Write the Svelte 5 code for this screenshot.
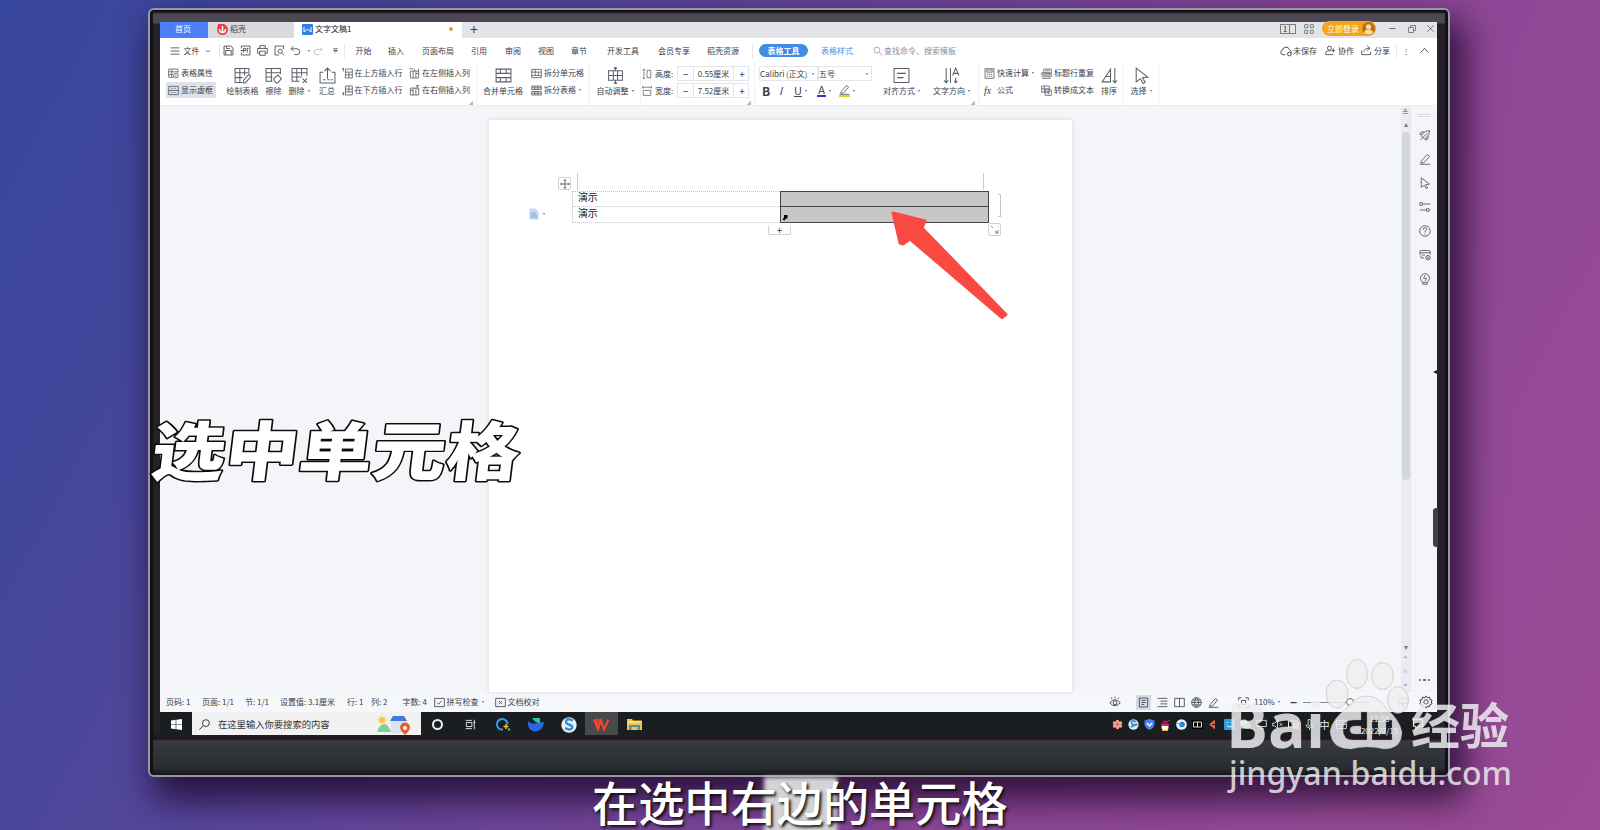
<script lang="ts">
	// 16x16 line icons, drawn with the current text colour.
	const icons: Record<string, string> = {
		menu: 'M1 3h14M1 8h14M1 13h14',
		down: 'M2 5l6 6 6-6',
		up: 'M1 12l7-8 7 8',
		save: 'M1.500 1.500h10l3 3v10h-13zM4 14v-6h8v6M5 2v3h5',
		pdf: 'M2 5v-3.500h12.500v13h-12.500v-3.500M5 11v-6h3.500v3h-3M1 8h4M10.500 5h2M10.500 5v6',
		print: 'M4 5v-4h8v4M3.500 12h-2.500v-7h14v7h-2.500M4 9h8v6h-8z',
		preview: 'M14 6v-4.500h-12.500v13h6M11 11.500l3.500 3.500M12 9a3 3 0 1 1-6 0a3 3 0 1 1 6 0z',
		undo: 'M5 2l-3.500 3.500l3.500 3.500M2 5.500h8a4 4 0 0 1 0 8.500h-4',
		redo: 'M11 2l3.500 3.500l-3.500 3.500M14 5.500h-8a4 4 0 0 0 0 8.500h4',
		more: 'M3 4h10M4 8l4 4 4-4z',
		search: 'M11 6.500a4.800 4.800 0 1 1-9.600 0a4.800 4.800 0 1 1 9.600 0zM10 10.500l5 5',
		find: 'M15 6a5 5 0 1 1-10 0a5 5 0 1 1 10 0zM6.500 9.500l-6 6',
		cloud: 'M7 13h-3a3.200 3.200 0 0 1-.5-6.300a4.600 4.600 0 0 1 9-.5a3.500 3.500 0 0 1 2 5M15 12a2.500 2.500 0 1 1-5 0a2.500 2.500 0 1 1 5 0z',
		person: 'M9.500 4.500a3 3 0 1 1-6 0a3 3 0 1 1 6 0zM8 14h-7v-2.500q0-3 4-3h3M12 5v6M9.500 8h5M8 14h4',
		share: 'M1 8v6h13v-4M4 10q1-5 8-5.500M9 1l4 3.500l-4 3.500',
		prop: 'M8 13.500h-7v-12h13.500v5M1 5.500h13.500M1 9.500h6M5.500 1.500v12M15 11a3.500 3.500 0 1 1-7 0a3.500 3.500 0 1 1 7 0zM11.500 9.500v3.500',
		frame: 'M1 2h14v12h-14zM1 8h14M5 5h2M9 5h2M5 11h2M9 11h2',
		draw: 'M8 14.500h-7v-13h13v5M1 5.500h12M1 10h7M5.500 1.500v13M10 2v6M9 15v-2.500l5-5.500l2 2l-5.500 6z',
		erase: 'M7 13.500h-6v-12h13.500v5M1 5.500h13M1 9.500h6M6 1.500v12M8 11.500l4-4l3.500 3.500l-3.500 4h-1.500z',
		del: 'M8 13.500h-7v-12h14v7M1 5.500h14M1 9.500h9M5.500 1.500v12M10 1.500v7M11 11l4 4M15 11l-4 4',
		sum: 'M4 5h-3v10h14v-10h-3M8 11v-10M5 4l3-3l3 3M4 12h2M8 12h2M11 12h2',
		rowUp: 'M5 1.500h10v13h-10zM5 6h10M5 10h10M10 6v8M0 1h3M2 0v5',
		rowDown: 'M5 1.500h10v13h-10zM5 6h10M5 10h10M10 1v9M0 13h3M2 10v5',
		colLeft: 'M2 4.500h12v10h-12zM6 4.500v10M10 4.500v10M10 8h4M1 1h5M8 1v3M14 1v4',
		colRight: 'M2 4.500h12v10h-12zM6 4.500v10M10 4.500v10M2 8h4M10 1h5M12 0v5',
		merge: 'M1 2h14v12h-14zM1 6h14M1 10h14M5 2v4M10.500 2v4M5 10v4M10.500 10v4',
		splitCell: 'M1 2h14v12h-14zM1 6h14M1 11h14M6 6v5M10.500 6v5M6 2v4',
		splitTable: 'M1 1.500h14v5h-14zM1 9.500h14v5h-14zM5.500 1.500v5M10 1.500v5M5.500 9.500v5M10 9.500v5M1 12h14M1 4h14',
		auto: 'M1.500 3.500h13v9h-13zM1.500 8h13M6 3.500v9M10 3.500v9M8 0v3M8 13v3M6.500 1.500l1.500-1.500l1.500 1.500M6.500 14.500l1.500 1.500l1.500-1.500',
		height: 'M1 1h4M3 1v14M1 15h4M8 2h6v12h-6z',
		width: 'M1 2h14M1 0v4M15 0v4M2 7h12v8h-12z',
		align: 'M1 1.500h14v13h-14zM4 6h8M4 10h6',
		direction: 'M3 1v14M1 12.500l2 2.500l2-2.500M7 1v14M9 8l3-7l3 7M10 6h4M12 10v5M10.500 13l1.500 2l1.500-2',
		calc: 'M1.500 1h13v14h-13zM4 3h8v3h-8zM4 9h2M7 9h2M10 9h2M4 12h2M7 12h2M10 12h2',
		repeat: 'M4 1.500h11v6h-11zM1 7h12v3h-12zM1 12h12v3h-12M6 4h7M15 8v5',
		convert: 'M1 1.500h11v9h-11zM1 5.500h11M5 1.500v9M6 7h9v8h-9zM8 10h5M10.500 10v4',
		sort: 'M1 14h8v-12zM5 9h4M13 1v14M11 12.500l2 2.500l2-2.500',
		select: 'M3 1l11 8.500l-5 .5l2.500 4.500l-2 1l-2.500-4.500l-4 3z',
		pen: 'M1 15h14M3 11l8-9l3 2.500l-7.500 8.500l-4 .5z',
		rocket: 'M4 11q-2-2 1-5q4-4 9-4q0 6-4 9.500q-3 3-5 0M4 7h-3l2-3h4M9 12v3l3-2v-4M11 5.500l-9 9',
		sliders: 'M5 4h10M4.500 4a1.800 1.800 0 1 1-3.500 0a1.800 1.800 0 1 1 3.500 0zM1 12h9M15 12h-1.500M13.500 12a1.800 1.800 0 1 1-3.500 0a1.800 1.800 0 1 1 3.500 0z',
		help: 'M15 8a7 7 0 1 1-14 0a7 7 0 1 1 14 0zM5.500 6.500q0-3 2.500-3t2.500 2.500q0 1-2.500 2.500v1.500M8 11.500v1.500',
		board: 'M7 12h-3.500q-1 0-1-1v-2M2.500 8q-1.500 0-1.500-2v-2q0-2 2-2h10q2 0 2 2v3M1 5h14M4 8h4M15 11.500a3 3 0 1 1-6 0a3 3 0 1 1 6 0zM10.500 10l3 3M13.500 10l-3 3',
		bulb: 'M14 7a6 6 0 1 1-12 0a6 6 0 1 1 12 0zM5 12v3h6v-3M8 3l-2 4h4l-2 4',
		eye: 'M1 9q7-8 14 0q-7 8-14 0zM10.500 9a2.500 2.500 0 1 1-5 0a2.500 2.500 0 1 1 5 0zM8 1v2M3 2l1 2M13 2l-1 2',
		doc: 'M2 1.500h12v13h-12zM5 5h6M5 8h6M5 11h4',
		list: 'M1 2h14M5 6h10M5 10h10M1 14h14',
		book: 'M1 2h14v12h-14zM8 2v12',
		globe: 'M15 8a7 7 0 1 1-14 0a7 7 0 1 1 14 0zM1 8h14M8 1q-6 7 0 14q6-7 0-14M2 4.500h12M2 11.500h12',
		full: 'M1 5v-4h4M11 1h4v4M15 11v4h-4M5 15h-4v-4M5 5h6v6h-6z',
		check: 'M1 2h14v12h-14zM4.500 8l2.500 2.500l4-5',
		proof: 'M1 2h14v12h-14zM5.500 5.500l5 5M10.500 5.500l-5 5',
		gear: 'M8 1l1.500 2.200l2.500-.8l.5 2.600l2.500.800l-1 2.200l1 2.200l-2.500.8l-.5 2.600l-2.500-.8l-1.500 2.200l-1.500-2.200l-2.500.8l-.5-2.600l-2.500-.8l1-2.200l-1-2.200l2.500-.8l.5-2.600l2.500.8zM10.500 8a2.500 2.500 0 1 1-5 0a2.500 2.500 0 1 1 5 0z',
		grid: 'M1 1h5v5h-5zM10 1h5v5h-5zM1 10h5v5h-5zM10 10h5v5h-5z',
		minimize: 'M1 8h14',
		restore: 'M1 5h10v10h-10zM5 5v-4h10v10h-4',
		close: 'M1 1l14 14M15 1l-14 14',
		move: 'M8 1v14M1 8h14M6 3l2-2l2 2M6 13l2 2l2-2M3 6l-2 2l2 2M13 6l2 2l-2 2',
		taskview: 'M1 2h9M1 14h9M2 5h8v6h-8zM13.500 1v14M12 5h3',
		mic: 'M6 1h4v9h-4zM3 8q0 5 5 5t5-5M8 13v3',
		monitor: 'M1 2h14v9h-14zM5 14h6',
		mute: 'M1 6h3l4-4v12l-4-4h-3zM11 6l4 4M15 6l-4 4',
		chat: 'M2 2h12v9h-5l-4 4v-4h-3z'
	};

	const quick = ['save', 'pdf', 'print', 'preview', 'undo'];
	const menus = ['开始', '插入', '页面布局', '引用', '审阅', '视图', '章节', '开发工具', '会员专享', '稻壳资源'];
	const side = ['rocket', 'pen', 'select', 'sliders', 'help', 'board', 'bulb'];
	const views = ['list', 'book', 'globe', 'pen'];
	const counters = ['页码: 1', '页面: 1/1', '节: 1/1', '设置值: 3.1厘米', '行: 1', '列: 2', '字数: 4'];
	const sizes = [
		{ icon: 'height', label: '高度:', value: '0.55厘米' },
		{ icon: 'width', label: '宽度:', value: '7.52厘米' }
	];
</script>

{#snippet icon(name: string, size = 11, weight = 1.2)}
	<svg class="icon" width={size} height={size} viewBox="0 0 16 16" stroke-width={weight}>
		<path d={icons[name]} />
	</svg>
{/snippet}

{#snippet big(name: string, label: string, caret = false)}
	<div class="big">
		{@render icon(name, 17, 0.95)}
		<span class:caret>{label}</span>
	</div>
{/snippet}

{#snippet small(name: string, label: string, caret = false, active = false)}
	<div class="small" class:active>
		{@render icon(name)}
		<span class:caret>{label}</span>
	</div>
{/snippet}

<div class="stage">
	<div class="monitor">
		<div class="screen">
			<header class="tabs">
				<div class="tab home">首页</div>
				<div class="tab docer">
					<svg width="11" height="11" viewBox="0 0 11 11">
						<path d="M1 0h6q4 2 4 6q-1 5-5.500 5t-5.500-5z" fill="#e3413f" />
						<path d="M5.500 2v6M2.500 5q0 3.500 3 3.500t3-3.500" fill="none" stroke="#fff" stroke-width="1.500" />
					</svg>
					<span>稻壳</span>
				</div>
				<div class="tab current">
					<svg width="11" height="11" viewBox="0 0 11 11">
						<rect width="11" height="11" rx="1" fill="#2f7fe0" />
						<path d="M2 3v5l3.500-3 3.500 3v-5" fill="none" stroke="#fff" stroke-width="1" />
					</svg>
					<span>文字文稿1</span>
					<i class="dirty"></i>
				</div>
				<span class="plus">+</span>
				<div class="window">
					<span class="panes"><b>1</b><i></i></span>
					{@render icon('grid', 10)}
					<span class="login">立即登录
						<svg width="13" height="13" viewBox="0 0 13 13">
							<circle cx="6.500" cy="6.500" r="6.500" fill="#b96f12" />
							<circle cx="6.500" cy="4.800" r="2.600" fill="#ffd9a0" />
							<path d="M2 11q0-3.500 4.500-3.500t4.500 3.500q-4.500 3-9 0z" fill="#ffd9a0" />
						</svg>
					</span>
					{@render icon('minimize', 7, 2)}
					{@render icon('restore', 8, 1.5)}
					{@render icon('close', 7, 2)}
				</div>
			</header>

			<nav class="menubar">
				{@render icon('menu', 10, 1.3)}
				<span>文件</span>
				{@render icon('down', 6, 1.8)}
				<i class="rule"></i>
				{#each quick as name}
					{@render icon(name)}
				{/each}
				<span class="caret"></span>
				<span class="faded">{@render icon('redo', 10)}</span>
				{@render icon('more', 7, 1.8)}
				<i class="rule"></i>
				{#each menus as label}
					<span>{label}</span>
				{/each}
				<i class="rule"></i>
				<span class="pill">表格工具</span>
				<span class="link">表格样式</span>
				<span class="hint">{@render icon('search', 10)}</span>
				<span class="hint">查找命令、搜索模板</span>
				{@render icon('cloud', 12)}
				<span>未保存</span>
				{@render icon('person', 11)}
				<span>协作</span>
				{@render icon('share', 11)}
				<span>分享</span>
				<i class="rule"></i>
				<span class="dim">⋮</span>
				{@render icon('up', 9, 1.6)}
			</nav>

			<div class="ribbon">
				<div class="stack">
					{@render small('prop', '表格属性')}
					{@render small('frame', '显示虚框', false, true)}
				</div>
				{@render big('draw', '绘制表格')}
				{@render big('erase', '擦除')}
				{@render big('del', '删除', true)}
				{@render big('sum', '汇总')}
				<div class="stack">
					{@render small('rowUp', '在上方插入行')}
					{@render small('rowDown', '在下方插入行')}
				</div>
				<div class="stack corner">
					{@render small('colLeft', '在左侧插入列')}
					{@render small('colRight', '在右侧插入列')}
				</div>
				<div class="group">{@render big('merge', '合并单元格')}</div>
				<div class="stack">
					{@render small('splitCell', '拆分单元格')}
					{@render small('splitTable', '拆分表格', true)}
				</div>
				<div class="group">{@render big('auto', '自动调整', true)}</div>
				<div class="stack group corner">
					{#each sizes as row}
						<div class="size">
							{@render icon(row.icon, 10)}
							<span>{row.label}</span>
							<div class="stepper"><b>−</b><span>{row.value}</span><b>+</b></div>
						</div>
					{/each}
				</div>
				<div class="stack group font">
					<div class="selects">
						<span class="caret">Calibri (正文)</span>
						<span class="caret">五号</span>
					</div>
					<div class="formats">
						<b>B</b>
						<i>I</i>
						<span class="caret"><u>U</u></span>
						<span class="caret"><span class="ink">A</span></span>
						<span class="caret marker">{@render icon('pen', 11, 1.3)}</span>
					</div>
				</div>
				{@render big('align', '对齐方式', true)}
				<div class="corner">{@render big('direction', '文字方向', true)}</div>
				<div class="stack group calc">
					{@render small('calc', '快速计算', true)}
					<div class="small"><em>fx</em><span>公式</span></div>
				</div>
				<div class="stack">
					{@render small('repeat', '标题行重复')}
					{@render small('convert', '转换成文本')}
				</div>
				{@render big('sort', '排序')}
				<div class="group last">{@render big('select', '选择', true)}</div>
			</div>

			<main class="work">
				<div class="canvas">
					<article class="page">
						<table>
							<tbody>
								<tr><td>演示</td><td class="picked"></td></tr>
								<tr><td>演示</td><td class="picked"></td></tr>
							</tbody>
						</table>
						<i class="crop left"></i>
						<i class="crop right"></i>
						<span class="handle move">{@render icon('move', 10, 1.2)}</span>
						<span class="handle add">+</span>
						<span class="handle resize">
							<svg width="11" height="11" viewBox="0 0 11 11"><path d="M2 2l2 2M6 7l3 2M9 6v3h-3" fill="none" stroke="#888" /></svg>
						</span>
						<i class="bracket"></i>
						<svg class="paste" width="18" height="12" viewBox="0 0 18 12">
							<path d="M1 1h5l3 3v7h-8z" fill="#c9dcf2" stroke="#a9c3e4" stroke-width=".7" />
							<path d="M2 5h5M2 7h6M2 9h6" stroke="#6b9bd2" stroke-width=".8" />
							<path d="M13.500 5h3l-1.500 2z" fill="#999" />
						</svg>
						<svg class="cellmark" width="6" height="6" viewBox="0 0 6 6"><path d="M2 0h3.500v3.500l-1.500 0l-1.500 2l-2-1l1.500-2z" /></svg>
					</article>
				</div>
				<div class="scroll">
					<span>≛</span>
					<span>▴</span>
					<i></i>
					<span>▾</span><span>⌃</span><span>▫</span><span>⌄</span>
				</div>
				<aside class="rail">
					<i></i>
					{#each side as name}
						{@render icon(name, 12, 1.2)}
					{/each}
					<span class="dots"><b></b><b></b><b></b></span>
				</aside>
			</main>

			<footer class="status">
				{#each counters as text}
					<span>{text}</span>
				{/each}
				<span class="spell">{@render icon('check', 11)}<span class="caret">拼写检查</span></span>
				<span class="spell proof">{@render icon('proof', 11)}<span>文档校对</span></span>
				{@render icon('eye', 12)}
				<span class="viewing">{@render icon('doc', 11)}</span>
				{#each views as name}
					{@render icon(name, 11)}
				{/each}
				{@render icon('full', 11)}
				<span class="caret">110%</span>
				<b>−</b>
				<span class="slider"><i></i></span>
				<span class="ime">中</span>
				{@render icon('gear', 14, 1.1)}
			</footer>

			<div class="taskbar">
				<svg class="start" width="11" height="11" viewBox="0 0 11 11">
					<path d="M0 1.500l4.700-.7v4.400h-4.700zM5.300.7l5.700-.7v5.200h-5.700zM0 5.800h4.700v4.400l-4.700-.7zM5.300 5.800h5.700v5.200l-5.700-.7z" fill="#fff" />
				</svg>
				<div class="find">
					{@render icon('find', 11, 1.4)}
					<span>在这里输入你要搜索的内容</span>
					<svg width="34" height="20" viewBox="0 0 34 20">
						<circle cx="5" cy="5" r="3" fill="#fbbf2d" />
						<path d="M5 0v10M0 5h10M1.500 1.500l7 7M8.500 1.500l-7 7" stroke="#fbc95a" stroke-width=".8" />
						<path d="M0 17q2-7 7-8q4 0 7 8z" fill="#80cf8c" />
						<rect x="14" y="3" width="15" height="15" rx="2" fill="#dfe5ee" />
						<path d="M13 6l3-5h11l3 5z" fill="#3d7be0" />
						<path d="M28 20q-5-5-5-7.500a5 5 0 0 1 10 0q0 2.500-5 7.500z" fill="#e5602b" />
						<circle cx="28" cy="13" r="2" fill="#fff" />
					</svg>
				</div>
				<div class="apps">
					<span><i class="cortana"></i></span>
					<span>{@render icon('taskview', 11, 1.3)}</span>
					<span>
						<svg width="16" height="15" viewBox="0 0 16 15">
							<path d="M8 12.500a5.300 5.300 0 1 1 4.500-5" fill="none" stroke="#2f9df0" stroke-width="2" />
							<path d="M11 7v5M8.500 9.500h5" stroke="#f0c030" stroke-width="1.500" />
							<circle cx="14" cy="12.500" r="1.300" fill="#43c463" />
						</svg>
					</span>
					<span>
						<svg width="16" height="14" viewBox="0 0 16 14">
							<path d="M0 3q4 4 8 2l8-1q-1 9-9 9.500q-8-1-7-10.500z" fill="#2868e8" />
							<path d="M4 0h8v5q-5 0-8-5z" fill="#27c3b0" />
						</svg>
					</span>
					<span>
						<svg width="16" height="16" viewBox="0 0 16 16">
							<circle cx="8" cy="8" r="7.700" fill="#e6f2fb" />
							<path d="M12 3.500q-7-3-7 1.200q0 2 3.500 3t2.500 3.500q-2 2.500-7 0" fill="none" stroke="#3e8fd2" stroke-width="2.500" />
						</svg>
					</span>
					<span class="open">
						<svg width="17" height="13" viewBox="0 0 17 13">
							<path d="M1 1h7l-3 10z" fill="#e23a25" />
							<path d="M1 1.500l4 10l3-9l3 9l4.500-10" fill="none" stroke="#f0492f" stroke-width="2" />
						</svg>
					</span>
					<span>
						<svg width="15" height="13" viewBox="0 0 15 13">
							<path d="M0 1h5l1 1.500h9v9.500h-15z" fill="#f6c343" />
							<path d="M2 7h11v5h-2.500v-3h-6v3h-2.500z" fill="#4b8fb8" />
							<path d="M1 4h13" stroke="#fde596" stroke-width="1.500" />
						</svg>
					</span>
				</div>
				<div class="tray">
					<svg width="11" height="11" viewBox="0 0 11 11"><path d="M5.500 2.500v6M2.500 4l6 3M8.500 4l-6 3" stroke="#f19a92" stroke-width="3.500" stroke-linecap="round" /><circle cx="5.500" cy="5.500" r="1" fill="#a33" /></svg>
					<svg width="11" height="11" viewBox="0 0 16 16"><circle cx="8" cy="8" r="7.500" fill="#dcedf9" /><path d="M12 4q-7-3-7 1t6 3t-7 3.500" fill="none" stroke="#3e8fd2" stroke-width="2.500" /></svg>
					<svg width="11" height="11" viewBox="0 0 11 11"><path d="M5.500 0l5 1.500v4q-1 4-5 5.500q-4-1.500-5-5.500v-4z" fill="#4c7ff0" /><path d="M3 4l2.500 3l2.500-3" fill="none" stroke="#fff" stroke-width="1.400" /></svg>
					<svg width="11" height="12" viewBox="0 0 11 12"><circle cx="5" cy="4" r="2.800" fill="#8b1c46" /><ellipse cx="5" cy="8.500" rx="3.500" ry="3" fill="#fff" /><path d="M1 6h8" stroke="#e0245e" stroke-width="2" /><path d="M2 11.500h6" stroke="#f4ad22" /><path d="M7 3l3-2" stroke="#e0245e" /></svg>
					<svg width="11" height="11" viewBox="0 0 11 11"><circle cx="5.500" cy="5.500" r="5.300" fill="#eef7ff" /><circle cx="6" cy="5.500" r="2.800" fill="#1d80cf" /><path d="M0 4q5 0 7 3" stroke="#55b7e5" fill="none" /></svg>
					<svg width="11" height="9" viewBox="0 0 11 9"><rect width="11" height="9" fill="#000" /><path d="M1.500 2h8v5h-8zM5.500 2v5" fill="none" stroke="#ddd" /></svg>
					<svg width="11" height="11" viewBox="0 0 11 11"><path d="M1 5.500l6-5v10z" fill="#e0693a" /><path d="M4 5.500h3" stroke="#222" /></svg>
					<svg width="11" height="11" viewBox="0 0 11 11"><rect width="11" height="11" rx="1" fill="#2aa1d8" /><path d="M3 7q3 2 5 0M3 3v1M8 3v1" fill="none" stroke="#fff" /></svg>
					<svg width="11" height="11" viewBox="0 0 11 11"><ellipse cx="4" cy="4" rx="4" ry="3.500" fill="#ddd" /><ellipse cx="7" cy="7" rx="4" ry="3" fill="#58c46a" /></svg>
					{@render icon('monitor')}
					{@render icon('mute')}
					<svg width="11" height="11" viewBox="0 0 11 11"><path d="M.5 2h9v6h-9z" fill="none" stroke="#eee" /><rect x="5" y="4" width="6" height="6" fill="#e79035" /></svg>
					{@render icon('mic')}
					<span>中</span>
					{@render icon('frame')}
				</div>
				<div class="clock"><span>11:58</span><span>2022/7/15</span></div>
				{@render icon('chat', 12, 1.6)}
			</div>
			<i class="tick"></i>
			<i class="drawer"></i>
		</div>
	</div>

	<svg class="arrow" width="118" height="111" viewBox="0 0 118 111">
		<path d="M2 3L34 11L31 18L115 104.500L111 107.500L19 29L12 34L9 33Z" fill="#f84a43" stroke="#f84a43" stroke-width="3" stroke-linejoin="round" />
	</svg>

	<svg class="headline" width="400" height="80" viewBox="0 0 400 80">
		<text x="9" y="63" textLength="368" lengthAdjust="spacingAndGlyphs" transform="skewX(-7)">选中单元格</text>
	</svg>

	<i class="glow"></i>
	<p class="caption">在选中右边的单元格</p>

	<svg class="mark" width="300" height="160" viewBox="0 0 300 160">
		<g class="toes">
			<ellipse cx="117" cy="49" rx="11" ry="14" />
			<ellipse cx="137" cy="29" rx="10.500" ry="14.500" />
			<ellipse cx="162.500" cy="31" rx="11" ry="13.500" />
			<ellipse cx="178" cy="55" rx="10.500" ry="13.500" />
			<path
				fill-rule="evenodd"
				d="M147 51q12 0 19 12q14 12 16 24q0 17-18 17q-17-4-33 0q-20 0-21-18q2-12 17-23q8-12 20-12zM141 67h6v28h-14q-10 0-10-10t10-10h8zM141 81h-6q-5 0-5 4t5 4h6zM152 75h6v14h8v-14h6v20h-20z"
			/>
		</g>
		<text class="latin" x="6" y="103" textLength="99" lengthAdjust="spacingAndGlyphs">Bai</text>
		<text class="han" x="191" y="99" textLength="98" lengthAdjust="spacingAndGlyphs">经验</text>
		<text class="site" x="9" y="140" textLength="283" lengthAdjust="spacingAndGlyphs">jingyan.baidu.com</text>
	</svg>
</div>

<style>
	:global(body) {
		margin: 0;
		overflow: hidden;
	}
	.stage {
		position: relative;
		box-sizing: border-box;
		width: 1600px;
		height: 830px;
		padding: 8px 0 0 148px;
		overflow: hidden;
		font: 8px/1 'Noto Sans CJK SC', sans-serif;
		color: #3c4048;
		white-space: nowrap;
		background: linear-gradient(118deg, #37469d 0%, #41479b 14%, #55469a 30%, #704598 48%, #8a4696 66%, #924996 82%, #9a4b94 100%);
	}
	.icon {
		display: block;
		flex: none;
		fill: none;
		stroke: currentColor;
	}
	.rule {
		width: 1px;
		height: 14px;
		background: #e6e8ec;
	}
	.caret::after {
		content: '';
		display: inline-block;
		margin-left: 3px;
		vertical-align: 2px;
		border: 1.5px solid transparent;
		border-top: 2px solid #666;
		border-bottom: 0;
	}

	.monitor {
		box-sizing: border-box;
		width: 1302px;
		height: 769px;
		padding: 12px 11px 0 10px;
		border: 2px solid #9b95a8;
		border-radius: 6px;
		background: linear-gradient(#141319 0 2px, #4d4754 4px 13px, #25222a 14px 720px, #21161d 729px, #363a41 731px, #2a2c31 758px, #17171a 765px);
		box-shadow:
			inset 3px 0 1px #111116,
			inset -3px 0 1px #111116,
			10px 18px 34px 5px rgb(25 5 38 / 78%);
	}
	.screen {
		position: relative;
		display: flex;
		flex-direction: column;
		width: 1277px;
		height: 713px;
		background: #f4f5f8;
	}

	.tabs {
		display: flex;
		align-items: center;
		height: 16px;
		background: #e2e4e7;
	}
	.tab {
		display: flex;
		align-items: center;
		box-sizing: border-box;
		height: 16px;
		line-height: 12px;
		padding-bottom: 2px;
	}
	.home {
		justify-content: center;
		width: 48px;
		padding-right: 2px;
		color: #fff;
		background: #4d80f5;
	}
	.docer {
		gap: 2px;
		width: 86px;
		padding-left: 9px;
		background: #d9dade;
	}
	.current {
		gap: 2px;
		width: 168px;
		padding-right: 9px;
		padding-left: 8px;
		color: #222;
		background: #fff;
	}
	.dirty {
		width: 4px;
		height: 4px;
		margin-left: auto;
		border-radius: 50%;
		background: #d1a33c;
	}
	.plus {
		margin: -3px 0 0 8px;
		font-size: 14px;
	}
	.window {
		display: grid;
		grid-template-columns: 24px 18px 67px 19px 19px 7px;
		align-items: center;
		margin: -3px 0 0 auto;
		padding-right: 3px;
		color: #5b6070;
	}
	.panes {
		display: flex;
		box-sizing: border-box;
		width: 16px;
		height: 10px;
		justify-content: center;
		border: 1px solid #777c8c;
		font-size: 7px;
		line-height: 8px;
	}
	.panes i {
		width: 3px;
		margin-left: 2px;
		border-left: 1px solid #777c8c;
	}
	.login {
		display: flex;
		align-items: center;
		justify-content: space-between;
		box-sizing: border-box;
		width: 54px;
		height: 15px;
		padding: 0 1px 0 5px;
		border-radius: 8px;
		color: #fff;
		background: #f3a51b;
	}

	.menubar {
		display: grid;
		grid-template-columns:
			14px 21px 14px 4px 17.500px 16.500px 17px 16.500px 15px 8px 19px 12px 11.500px
			32.500px 34px 49px 34px 33px 33px 36px 51px 49px 45px 7px 62px 52px 11px 396px
			13px 32px 13px 23px 13px 22px 9px 15px 10px;
		align-items: center;
		height: 25px;
		padding-left: 9.500px;
		background: #fff;
	}
	.menubar > .pill {
		width: 49px;
		height: 13px;
		border-radius: 7px;
		line-height: 13px;
		text-align: center;
		font-weight: 700;
		color: #fff;
		background: #428be8;
	}
	.link {
		color: #4793e8;
	}
	.hint {
		color: #8790a3;
	}
	.faded {
		opacity: 0.4;
	}
	.dim {
		width: 8px;
		margin-left: -3px;
		color: #666;
	}

	.ribbon {
		display: grid;
		grid-template-columns:
			55.500px 42px 20px 31px 25px 67.500px 69px 53px 60px 51px 114px
			124px 47px 53px 61px 56px 28px 36px;
		height: 43px;
		padding-left: 6px;
		background: #fff;
		border-bottom: 1px solid #eceef2;
		box-sizing: border-box;
	}
	.ribbon .icon {
		color: #5a5e67;
	}
	.group {
		border-left: 1px solid #f0f1f4;
	}
	.last {
		border-right: 1px solid #f0f1f4;
	}
	.corner {
		background: linear-gradient(135deg, transparent 50%, #b5b9c2 50%) no-repeat calc(100% - 3px) 38px / 4px 4px;
	}
	.stack {
		display: grid;
		grid-template-rows: 17px 17px;
		align-content: start;
		padding-top: 2px;
	}
	.small {
		display: flex;
		align-items: center;
		gap: 2px;
		height: 16px;
		padding-left: 2px;
	}
	.active {
		width: 48px;
		background: #dde1ea;
	}
	.calc {
		padding-left: 3px;
	}
	.small em {
		width: 11px;
		font: italic 10px 'Liberation Serif', serif;
	}
	.big {
		display: flex;
		flex-direction: column;
		align-items: center;
		gap: 3px;
		padding-top: 4px;
	}
	.size {
		display: grid;
		grid-template-columns: 13px 22px 72px;
		align-items: center;
		padding-left: 1px;
	}
	.stepper {
		display: grid;
		grid-template-columns: 15px 41px 16px;
		box-sizing: border-box;
		height: 15px;
		border: 1px solid #e4e6ea;
		line-height: 13px;
		text-align: center;
	}
	.stepper b {
		font-size: 10px;
		font-weight: 400;
	}
	.stepper span {
		box-sizing: border-box;
		width: 41px;
		border: solid #e4e6ea;
		border-width: 0 1px;
	}
	.font {
		padding-left: 4px;
	}
	.selects {
		display: grid;
		grid-template-columns: 59px 54px;
		height: 15px;
		margin-top: 1px;
	}
	.selects span {
		display: flex;
		align-items: center;
		justify-content: space-between;
		border: 1px solid #e4e6ea;
		padding-right: 3px;
	}
	.formats {
		display: grid;
		grid-template-columns: 17px 15px 23px 22px 20px;
		align-items: center;
		padding-left: 3px;
		font-size: 11px;
	}
	.formats b {
		font-size: 12px;
	}
	.formats .caret {
		display: flex;
		align-items: center;
	}
	.ink {
		width: 9px;
		height: 10px;
		line-height: 8px;
		text-align: center;
		border-bottom: 2px solid #3434b8;
	}
	.marker .icon {
		border-bottom: 2px solid #d9d72e;
	}

	.work {
		display: flex;
		height: 586px;
	}
	.canvas {
		flex: 1;
		padding: 14px 0 0 329px;
	}
	.page {
		position: relative;
		width: 583px;
		height: 572px;
		background: #fff;
		box-shadow: 0 0 5px rgb(0 0 0 / 12%);
	}
	table {
		position: relative;
		top: 70.500px;
		margin-left: 83px;
		width: 417px;
		border-collapse: collapse;
		table-layout: fixed;
		color: #111;
		font-size: 9.8px;
	}
	td {
		box-sizing: border-box;
		height: 15.7px;
		padding: 0 5px 1px;
		border: 1px dotted #c4c4c4;
	}
	td.picked {
		border: 1px solid #444;
		background: #c7c7c7;
	}
	.crop {
		position: absolute;
		top: 53px;
		width: 1px;
		height: 17px;
		background: #ccc;
	}
	.crop.left {
		left: 88px;
	}
	.crop.right {
		left: 494px;
	}
	.handle {
		position: absolute;
		display: flex;
		align-items: center;
		justify-content: center;
		box-sizing: border-box;
		width: 13px;
		height: 13px;
		border: 1px solid #d2d2d2;
		border-radius: 2px;
		background: #fff;
	}
	.move {
		left: 69px;
		top: 57px;
	}
	.add {
		left: 279px;
		top: 105px;
		width: 23px;
		height: 10px;
		border-top: 0;
		font-size: 10px;
	}
	.resize {
		left: 499px;
		top: 103px;
	}
	.bracket {
		position: absolute;
		left: 509px;
		top: 74px;
		width: 3px;
		height: 23px;
		border: 1px solid #c4c4c4;
		border-left: 0;
		box-sizing: border-box;
	}
	.paste {
		position: absolute;
		left: 40px;
		top: 88px;
	}
	.cellmark {
		position: absolute;
		left: 293px;
		top: 95px;
	}
	.scroll {
		display: flex;
		flex-direction: column;
		align-items: center;
		width: 9px;
		padding-bottom: 3px;
		background: #ebecf3;
		color: #777c88;
	}
	.scroll span {
		height: 12px;
		line-height: 12px;
	}
	.scroll i {
		width: 8px;
		height: 348px;
		margin: 2px 0 auto;
		border-radius: 4px;
		background: #d3d6de;
	}
	.rail {
		display: flex;
		flex-direction: column;
		align-items: center;
		gap: 12px;
		width: 25px;
		padding: 8px 0 0 1px;
		border-left: 1px solid #e5e7ec;
		color: #5a5e6b;
	}
	.rail > i {
		width: 13px;
		height: 1px;
		border: solid #dcdde0;
		border-width: 1px 0;
	}
	.dots {
		display: flex;
		gap: 2px;
		margin: auto 0 11px;
	}
	.dots b {
		width: 2.5px;
		height: 2.5px;
		border-radius: 50%;
		background: #5a5e6b;
	}

	.status {
		display: grid;
		grid-template-columns:
			36px 43px 35px 67px 24px 31.500px 31px 61px 614px 28px 20px 17px 17px 17px 30.500px
			16px 36px 13px 104px 12px 14px;
		align-items: center;
		height: 20px;
		padding-left: 6px;
		background: #f5f7fb;
	}
	.spell {
		display: flex;
		align-items: center;
		gap: 2px;
	}
	.viewing {
		justify-self: start;
		margin-left: -1px;
		padding: 2px;
		background: #d5d9e4;
	}
	.status b {
		font-size: 12px;
	}
	.slider {
		display: flex;
		align-items: center;
		width: 66px;
		height: 9px;
		background: linear-gradient(#888, #888) no-repeat 0 50% / 100% 1px;
	}
	.slider i {
		width: 6px;
		height: 6px;
		margin-left: 43px;
		border: 1px solid #666;
		border-radius: 50%;
		background: #fff;
	}
	.ime {
		font-size: 12px;
		margin-left: -10px;
		color: #999;
	}

	.taskbar {
		display: flex;
		align-items: center;
		height: 23px;
		color: #eee;
		background: #1b1e20;
	}
	.start {
		margin: 1px 10px 0 11px;
	}
	.find {
		display: grid;
		grid-template-columns: 19px 159px 34px;
		align-items: center;
		box-sizing: border-box;
		width: 229px;
		height: 23px;
		padding: 2px 0 0 7px;
		color: #333;
		background: #f1f1f1;
	}
	.find span {
		font-size: 9.3px;
	}
	.apps {
		display: grid;
		grid-template-columns: repeat(7, 32.800px);
	}
	.apps span {
		display: flex;
		align-items: center;
		justify-content: center;
		box-sizing: border-box;
		height: 23px;
		padding-top: 2px;
	}
	.apps .open {
		background: #48494b;
	}
	.cortana {
		width: 7px;
		height: 7px;
		border: 2px solid #eee;
		border-radius: 50%;
	}
	.tray {
		display: grid;
		grid-template-columns: repeat(15, 16px);
		align-items: center;
		margin: 2px 0 0 461px;
	}
	.tray span {
		font-size: 10px;
	}
	.clock {
		display: flex;
		flex-direction: column;
		align-items: center;
		gap: 4px;
		width: 40px;
		margin: 2px 12px 0 8px;
	}
	.drawer {
		position: absolute;
		right: -1px;
		top: 486px;
		width: 5px;
		height: 39px;
		border-radius: 3px 0 0 3px;
		background: #3d424b;
	}
	.tick {
		position: absolute;
		right: 0;
		top: 348px;
		border: 2px solid transparent;
		border-right: 4px solid #222;
		border-left: 0;
	}

	.arrow {
		position: absolute;
		left: 891px;
		top: 210px;
	}
	.headline {
		position: absolute;
		left: 148px;
		top: 412px;
		overflow: visible;
	}
	.headline text {
		font: 900 64px 'Noto Sans CJK SC', sans-serif;
		fill: #fff;
		stroke: #0b0b0b;
		stroke-width: 3px;
		stroke-linejoin: round;
		paint-order: stroke;
	}
	.glow {
		position: absolute;
		left: 764px;
		top: 777px;
		width: 73px;
		height: 60px;
		background: #d4d4d4;
		filter: blur(2px);
	}
	.caption {
		position: absolute;
		left: 592px;
		top: 778px;
		margin: 0;
		font-size: 46.2px;
		font-weight: 500;
		line-height: 46px;
		color: #fff;
		text-shadow: 2px 2px 3px #111;
	}
	.mark {
		position: absolute;
		left: 1220px;
		top: 645px;
		fill: rgb(238 238 240 / 84%);
	}
	.toes {
		stroke: rgb(150 150 155 / 35%);
	}
	.latin {
		font: 700 62px 'Open Sans', sans-serif;
	}
	.han {
		font: 700 49px 'Noto Sans CJK SC', sans-serif;
	}
	.site {
		font: 500 32px 'Noto Sans', sans-serif;
	}
</style>
